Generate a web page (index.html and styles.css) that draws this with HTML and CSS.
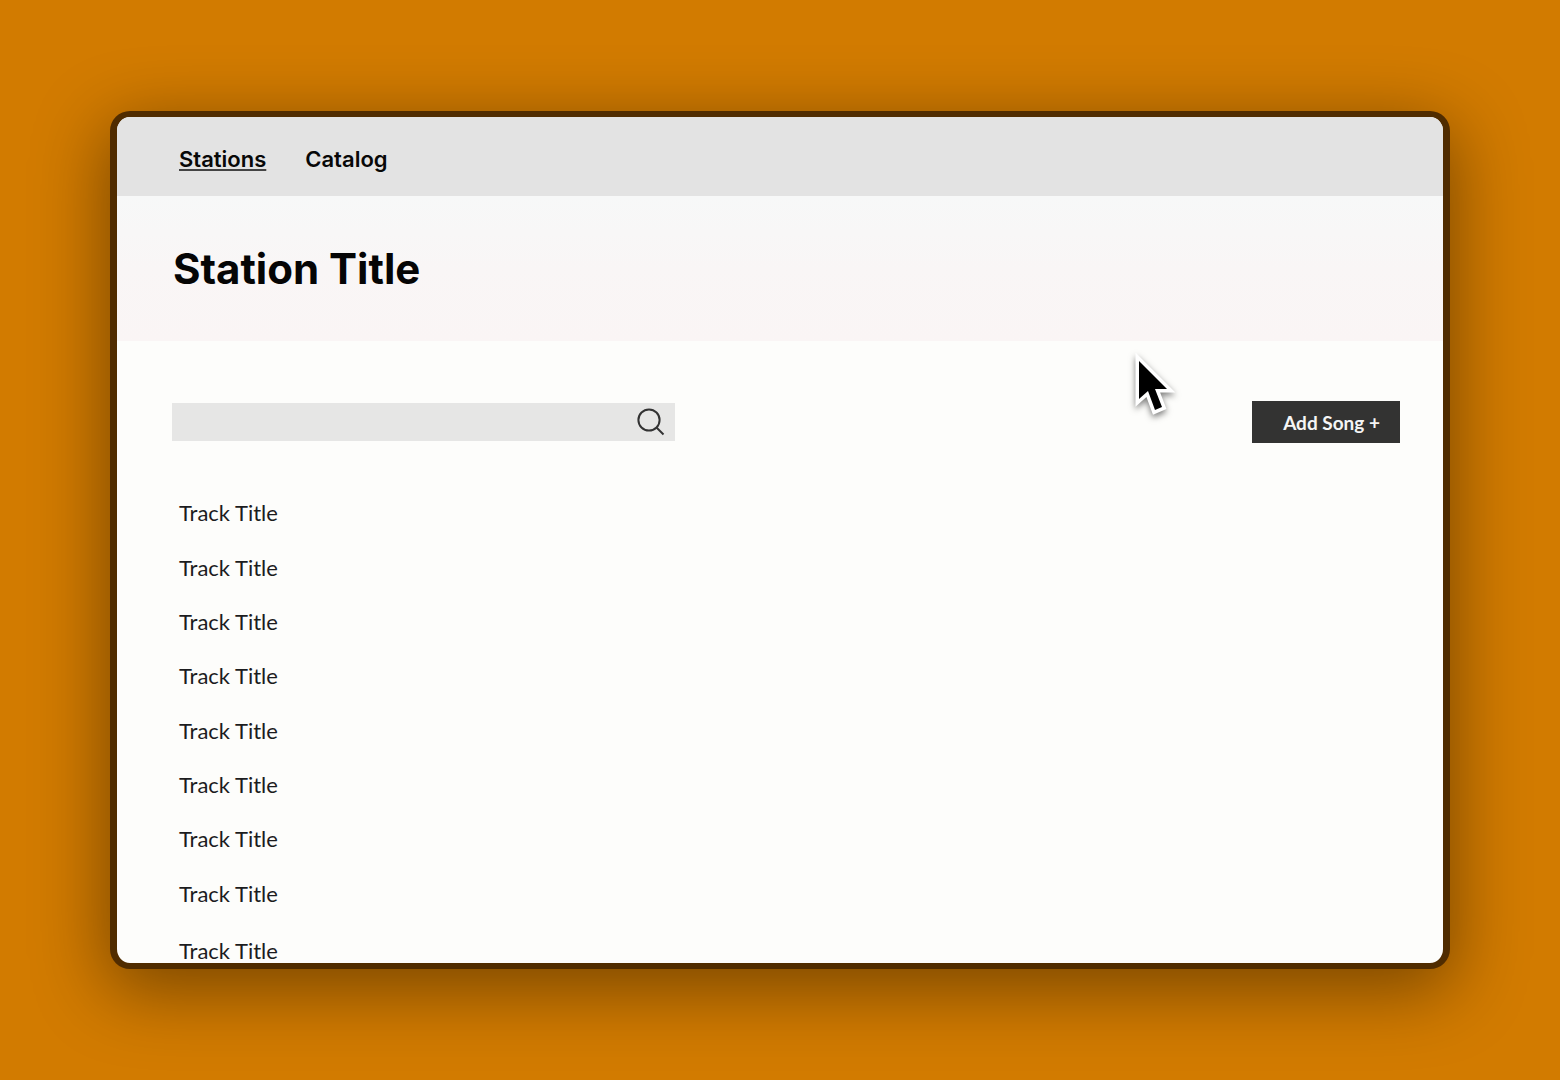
FILE: index.html
```html
<!DOCTYPE html>
<html lang="en">

<head>
  <meta charset="UTF-8">
  <meta name="viewport" content="width=device-width, initial-scale=1.0">
  <title>Station Title</title>
  <link rel="stylesheet" href="styles.css">
</head>

<body>
  <div class="window">
    <!-- top navigation -->
    <header class="topbar">
      <nav>
        <a href="#stations" class="active">Stations</a>
        <a href="#catalog">Catalog</a>
      </nav>
    </header>

    <div class="heading">
      <h1>Station Title</h1>
    </div>

    <main>
      <!-- search + add song -->
      <div class="toolbar">
        <form class="search">
          <input type="search" aria-label="Search tracks">
          <button type="submit" aria-label="Search">
            <svg width="28" height="28" viewBox="0 0 28 28" fill="none" stroke="#333" stroke-width="2">
              <circle cx="12" cy="12" r="10.6" />
              <path d="M19.5 19.5L26.5 26.5" />
            </svg>
          </button>
        </form>
        <button type="button" class="add-song">Add Song +</button>
      </div>

      <ul class="tracks">
        <li>Track Title</li>
        <li>Track Title</li>
        <li>Track Title</li>
        <li>Track Title</li>
        <li>Track Title</li>
        <li>Track Title</li>
        <li>Track Title</li>
        <li>Track Title</li>
        <li>Track Title</li>
      </ul>
    </main>

    <!-- mouse pointer over the page -->
    <svg class="pointer" width="44" height="66" viewBox="0 0 44 66">
      <path d="M6 8V46L15 38L22 57L29 54L22 36H34Z" fill="#000" stroke="#fff" stroke-width="7" paint-order="stroke" />
    </svg>
  </div>
</body>

</html>
```
FILE: styles.css
```css
* {
  margin: 0;
  padding: 0;
  box-sizing: border-box;
}

body {
  height: 100vh;
  padding: 111px 110px;
  background-color: #d27b00;
  font-family: Lato, sans-serif;
  color: #1c1c1e;
}

.window {
  position: relative;
  display: flex;
  flex-direction: column;
  height: 100%;
  border: 6px solid #502c00;
  border-width: 6px 7px;
  border-radius: 20px;
  background-color: #fdfdfb;
  overflow: hidden;
  box-shadow: 0 18px 72px 4px rgba(0, 0, 0, 0.42);
}

/* top navigation */
.topbar {
  padding: 0 62px;
  background-color: #e3e3e3;
}

.topbar nav {
  display: flex;
  gap: 39px;
  height: 79px;
  padding-top: 27px;
}

.topbar a {
  font-family: Inter, sans-serif;
  font-size: 22px;
  font-weight: 600;
  line-height: 30px;
  color: #080808;
  text-decoration: none;
}

.topbar a.active {
  text-decoration: underline #444;
  text-decoration-thickness: 2px;
  text-underline-offset: 2px;
}

.heading {
  padding: 48px 56px 47px;
  background-image: linear-gradient(#f7f8f8, #f9f6f6 50%, #faf5f5);
}

.heading h1 {
  font-family: Inter, sans-serif;
  font-size: 42px;
  font-weight: 700;
  line-height: 50px;
  color: #050505;
}

main {
  flex: 1;
  display: flex;
  flex-direction: column;
  padding: 60px 43px 0 55px;
}

/* search + add song */
.toolbar {
  display: flex;
  align-items: center;
  justify-content: space-between;
}

.search {
  display: flex;
  width: 41%;
  min-width: 240px;
  height: 38px;
  background-color: #e6e6e5;
}

.search input {
  flex: 1;
  min-width: 0;
  padding: 0 12px;
  border: none;
  background: none;
  font: inherit;
  font-size: 18px;
}

.search button {
  width: 48px;
  border: none;
  background: none;
  cursor: pointer;
}

.search svg {
  display: block;
  margin: auto;
}

.add-song {
  height: 42px;
  padding: 0 20px 0 31px;
  border: none;
  background-color: #333332;
  color: #f5f5f5;
  font-family: Lato, sans-serif;
  font-size: 19px;
  font-weight: 700;
  cursor: pointer;
}

/* track list */
.tracks {
  flex: 1;
  display: flex;
  flex-direction: column;
  padding: 43px 7px 0;
  list-style: none;
}

.tracks li {
  flex: 1;
  display: flex;
  align-items: center;
  font-size: 22px;
  line-height: 24px;
}

.tracks li:last-child {
  flex: none;
  align-items: flex-end;
  height: 42px;
}

.pointer {
  position: absolute;
  top: 236px;
  right: 266px;
  filter: drop-shadow(0 3px 3px rgba(0, 0, 0, 0.5));
}
```
